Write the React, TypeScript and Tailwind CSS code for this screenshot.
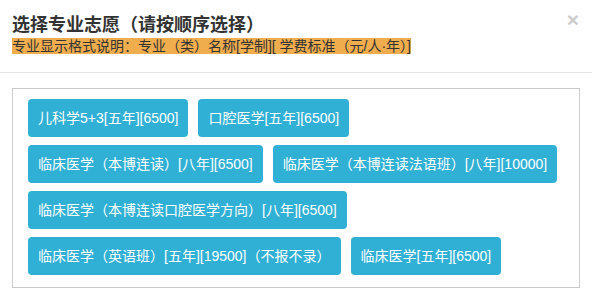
import React from "react";

const majors = [
  "儿科学5+3[五年][6500]",
  "口腔医学[五年][6500]",
  "临床医学（本博连读）[八年][6500]",
  "临床医学（本博连读法语班）[八年][10000]",
  "临床医学（本博连读口腔医学方向）[八年][6500]",
  "临床医学（英语班）[五年][19500]（不报不录）",
  "临床医学[五年][6500]",
];

export default function App() {
  return (
    <div
      className="w-[592px] h-[291px] bg-white text-[#333] overflow-hidden"
      style={{ fontFamily: '"Liberation Sans", "Noto Sans CJK SC", sans-serif' }}
    >
      <div className="relative px-3 pt-[12px] pb-[17px] border-b border-[#e5e5e5]">
        <h4 className="text-[18px] leading-[26px] font-bold m-0">选择专业志愿（请按顺序选择）</h4>
        <div className="text-[14px] leading-[17px]">
          <span className="bg-[#f0ad4e]">专业显示格式说明：专业（类）名称[学制][ 学费标准（元/人·年）]</span>
        </div>
        <button className="absolute right-[13px] top-[9px] text-[21px] font-bold leading-none text-black opacity-20">
          ×
        </button>
      </div>
      <div className="px-3 pt-[15px]">
        <div className="border border-[#ccc] pl-[15px] pr-[10px] pt-[10px] pb-[12px]">
          <div className="flex flex-wrap gap-x-[10px] gap-y-2">
            {majors.map((m) => (
              <button
                key={m}
                className="bg-[#31b0d5] text-white text-[14px] leading-[20px] px-[10px] py-[9px] rounded-[4px] whitespace-nowrap"
              >
                {m}
              </button>
            ))}
          </div>
        </div>
      </div>
    </div>
  );
}
